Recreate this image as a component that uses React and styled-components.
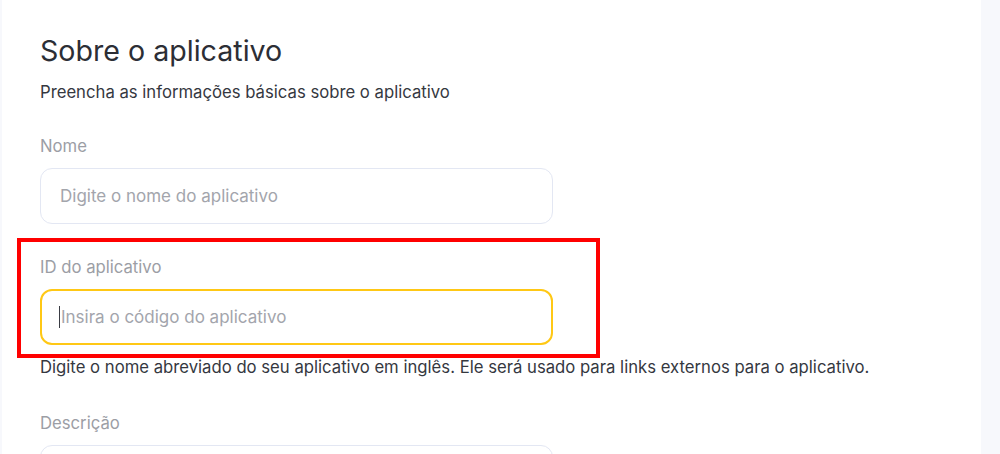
import React from "react";
import styled, { createGlobalStyle, css } from "styled-components";

const GlobalStyle = createGlobalStyle`
  html, body {
    margin: 0;
    padding: 0;
    background-color: #f7f8fc;
    font-family: Inter, "Noto Sans", sans-serif;
    overflow: hidden;
  }
`;

const Layout = styled.div`
  display: flex;
  height: 454px;
  padding-left: 2px;
`;

const Panel = styled.main`
  width: 979px;
  background-color: #ffffff;
  padding: 33px 0 0 38px;
  box-sizing: border-box;
`;

const Title = styled.h1`
  margin: 0;
  font-size: 28.6px;
  line-height: 36px;
  font-weight: 400;
  color: #2c2e35;
`;

const Subtitle = styled.p`
  margin: 13px 0 0;
  font-size: 16.7px;
  line-height: 20px;
  color: #35383f;
`;

const Form = styled.div`
  display: flex;
  flex-direction: column;
  gap: 33px;
  margin-top: 34px;
`;

const Field = styled.div`
  display: flex;
  flex-direction: column;
  width: 513px;
`;

// moldura vermelha de destaque (anotação por cima do campo)
const Highlight = styled.div`
  position: relative;
  display: flex;
  flex-direction: column;
  &::after {
    content: "";
    position: absolute;
    inset: -19px -47px -13px -23px;
    border: 4px solid #ff0000;
    pointer-events: none;
  }
`;

const Label = styled.label`
  font-size: 16.7px;
  line-height: 20px;
  color: #9c9ea5;
`;

const InputWrap = styled.div`
  position: relative;
  margin-top: 12px;
`;

const Input = styled.input`
  width: 100%;
  height: 56px;
  box-sizing: border-box;
  border: 1.5px solid #e3e7f3;
  border-radius: 12px;
  padding: 0 19px;
  font-family: Inter, "Noto Sans", sans-serif;
  font-size: 17px;
  color: #2c2e35;
  background: #ffffff;
  outline: none;
  &::placeholder {
    color: #a3a5ac;
  }
  ${(p) =>
    p.$active &&
    css`
      border: 2px solid #ffc815;
    `}
`;

const Caret = styled.span`
  position: absolute;
  left: 19px;
  top: 17px;
  width: 1px;
  height: 22px;
  background-color: #3a3c44;
`;

const Help = styled.p`
  margin: 12px 0 3px;
  font-size: 16.7px;
  line-height: 20px;
  color: #35383f;
  white-space: nowrap;
`;

export default function App() {
  return (
    <>
      <GlobalStyle />
      <Layout>
        <Panel>
          <Title>Sobre o aplicativo</Title>
          <Subtitle>Preencha as informações básicas sobre o aplicativo</Subtitle>
          <Form>
            <Field>
              <Label>Nome</Label>
              <InputWrap>
                <Input placeholder="Digite o nome do aplicativo" />
              </InputWrap>
            </Field>
            <Field>
              <Highlight>
                <Label>ID do aplicativo</Label>
                <InputWrap>
                  <Input $active placeholder="Insira o código do aplicativo" />
                  <Caret />
                </InputWrap>
              </Highlight>
              <Help>
                Digite o nome abreviado do seu aplicativo em inglês. Ele será
                usado para links externos para o aplicativo.
              </Help>
            </Field>
            <Field>
              <Label>Descrição</Label>
              <InputWrap>
                <Input placeholder="" />
              </InputWrap>
            </Field>
          </Form>
        </Panel>
      </Layout>
    </>
  );
}
